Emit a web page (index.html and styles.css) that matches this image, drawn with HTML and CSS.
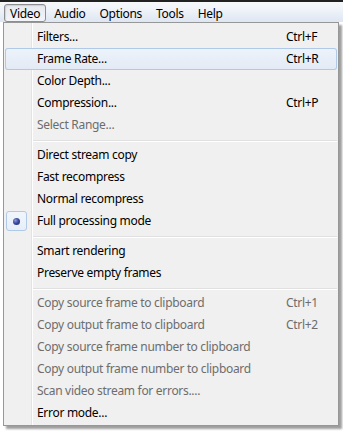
FILE: index.html
```html
<!DOCTYPE html>
<html>
<head>
<meta charset="utf-8">
<link rel="stylesheet" href="styles.css">
</head>
<body>
<div class="topline"></div>
<div class="menubar">
  <span class="mb-item active">Video</span>
  <span class="mb-item">Audio</span>
  <span class="mb-item">Options</span>
  <span class="mb-item">Tools</span>
  <span class="mb-item">Help</span>
</div>
<div class="menu">
  <div class="item"><span class="check"></span><span class="label">Filters...</span><span class="key">Ctrl+F</span></div>
  <div class="item hot"><span class="check"></span><span class="label">Frame Rate...</span><span class="key">Ctrl+R</span></div>
  <div class="item"><span class="check"></span><span class="label">Color Depth...</span><span class="key"></span></div>
  <div class="item"><span class="check"></span><span class="label">Compression...</span><span class="key">Ctrl+P</span></div>
  <div class="item disabled"><span class="check"></span><span class="label">Select Range...</span><span class="key"></span></div>
  <div class="sep"></div>
  <div class="item"><span class="check"></span><span class="label">Direct stream copy</span><span class="key"></span></div>
  <div class="item"><span class="check"></span><span class="label">Fast recompress</span><span class="key"></span></div>
  <div class="item"><span class="check"></span><span class="label">Normal recompress</span><span class="key"></span></div>
  <div class="item"><span class="check radio"><span class="dot"></span></span><span class="label">Full processing mode</span><span class="key"></span></div>
  <div class="sep"></div>
  <div class="item"><span class="check"></span><span class="label">Smart rendering</span><span class="key"></span></div>
  <div class="item"><span class="check"></span><span class="label">Preserve empty frames</span><span class="key"></span></div>
  <div class="sep"></div>
  <div class="item disabled"><span class="check"></span><span class="label">Copy source frame to clipboard</span><span class="key">Ctrl+1</span></div>
  <div class="item disabled"><span class="check"></span><span class="label">Copy output frame to clipboard</span><span class="key">Ctrl+2</span></div>
  <div class="item disabled"><span class="check"></span><span class="label">Copy source frame number to clipboard</span><span class="key"></span></div>
  <div class="item disabled"><span class="check"></span><span class="label">Copy output frame number to clipboard</span><span class="key"></span></div>
  <div class="item disabled"><span class="check"></span><span class="label">Scan video stream for errors....</span><span class="key"></span></div>
  <div class="item"><span class="check"></span><span class="label">Error mode...</span><span class="key"></span></div>
</div>
</body>
</html>
```

FILE: styles.css
```css
html, body {
  margin: 0;
  padding: 0;
  background: #ffffff;
}
body {
  font-family: "Noto Sans", "Open Sans", sans-serif;
  font-size: 12px;
  letter-spacing: -0.3px;
  color: #000;
  width: 343px;
  height: 431px;
  overflow: hidden;
}
.topline {
  height: 2px;
  background: #222;
}
.menubar {
  height: 20px;
  box-sizing: border-box;
  padding: 2px 0 0 4px;
  display: flex;
  gap: 2px;
  background: linear-gradient(#f7f9fb, #eef2f8 45%, #dde6f2);
}
.mb-item {
  height: 18px;
  box-sizing: border-box;
  border: 1px solid transparent;
  border-radius: 3px;
  padding: 1px 5px 0;
  line-height: 16px;
  white-space: nowrap;
}
.mb-item.active {
  border-color: #8c8e92;
  background: linear-gradient(#e6e9ee, #f3f5f8);
  box-shadow: inset 1px 1px 1px rgba(0,0,0,0.12);
}
.menu {
  margin-left: 3px;
  width: 336px;
  box-sizing: border-box;
  border: 1px solid #979797;
  padding: 3px 1px 1px;
  background:
    linear-gradient(90deg, transparent 27px, #e2e3e3 27px, #e2e3e3 28px, #ffffff 28px, #ffffff 29px, transparent 29px),
    #f0f0f0;
  box-shadow: 3px 3px 2px rgba(0,0,0,0.38);
}
.item {
  height: 22px;
  display: grid;
  grid-template-columns: 32px 1fr 44px;
  padding-right: 7px;
  line-height: 22px;
  white-space: nowrap;
  position: relative;
}
.item.hot {
  background: linear-gradient(#eef3fa, #e2eaf5);
  box-shadow: inset 0 0 0 1px #b0c9e6;
  border-radius: 3px;
}
.item.disabled {
  color: #6d6d6d;
}
.check {
  display: block;
}
.check.radio {
  width: 21px;
  height: 20px;
  box-sizing: border-box;
  margin: 1px 0 0 1px;
  border: 1px solid #b0c9e6;
  border-radius: 3px;
  background: linear-gradient(#f1f6fc, #e6eef8);
  display: flex;
  align-items: center;
  justify-content: center;
}
.dot {
  width: 7px;
  height: 7px;
  border-radius: 50%;
  background: radial-gradient(circle at 35% 35%, #8e9ad8 0, #3b4a9e 45%, #1d2766 100%);
}
.sep {
  height: 8px;
  margin-left: 28px;
  background: linear-gradient(transparent 4px, #e0e0e0 4px, #e0e0e0 5px, #ffffff 5px, #ffffff 6px, transparent 6px);
}
```
